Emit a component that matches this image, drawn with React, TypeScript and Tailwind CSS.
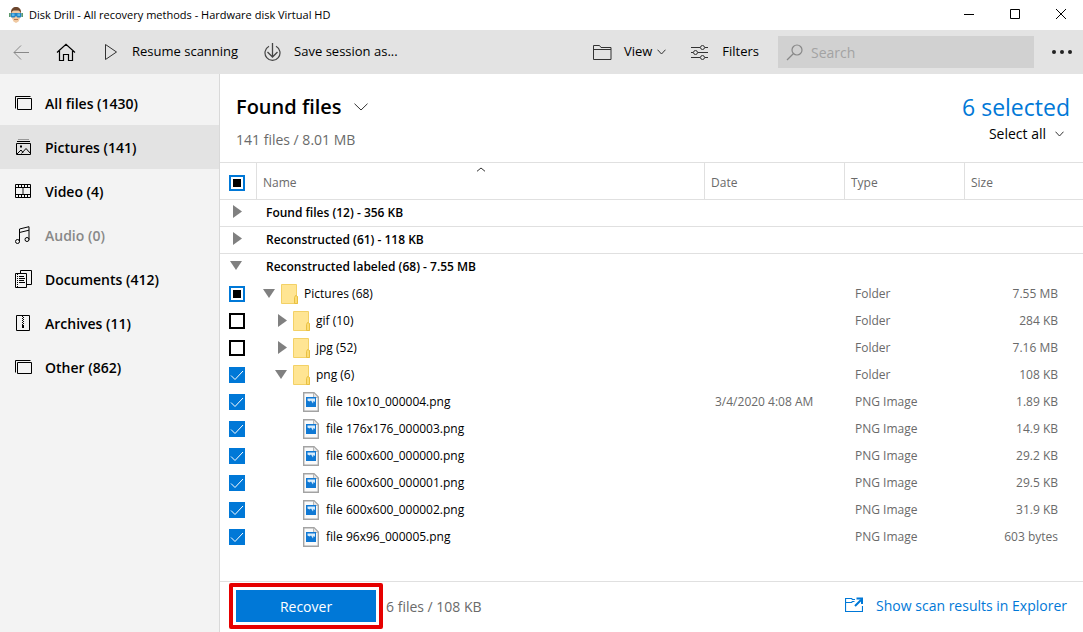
import { useEffect, useRef, type ReactNode } from "react";

type CheckState = "on" | "off" | "mixed";

type Row = {
  name: string;
  kind: "folder" | "file";
  level: 0 | 1 | 2;
  open?: boolean;
  check: CheckState;
  date?: string;
  type: string;
  size: string;
};

const rows: Row[] = [
  { name: "Pictures (68)", kind: "folder", level: 0, open: true, check: "mixed", type: "Folder", size: "7.55 MB" },
  { name: "gif (10)", kind: "folder", level: 1, check: "off", type: "Folder", size: "284 KB" },
  { name: "jpg (52)", kind: "folder", level: 1, check: "off", type: "Folder", size: "7.16 MB" },
  { name: "png (6)", kind: "folder", level: 1, open: true, check: "on", type: "Folder", size: "108 KB" },
  { name: "file 10x10_000004.png", kind: "file", level: 2, check: "on", date: "3/4/2020 4:08 AM", type: "PNG Image", size: "1.89 KB" },
  { name: "file 176x176_000003.png", kind: "file", level: 2, check: "on", type: "PNG Image", size: "14.9 KB" },
  { name: "file 600x600_000000.png", kind: "file", level: 2, check: "on", type: "PNG Image", size: "29.2 KB" },
  { name: "file 600x600_000001.png", kind: "file", level: 2, check: "on", type: "PNG Image", size: "29.5 KB" },
  { name: "file 600x600_000002.png", kind: "file", level: 2, check: "on", type: "PNG Image", size: "31.9 KB" },
  { name: "file 96x96_000005.png", kind: "file", level: 2, check: "on", type: "PNG Image", size: "603 bytes" },
];

const groups = [
  { name: "Found files (12) - 356 KB", open: false },
  { name: "Reconstructed (61) - 118 KB", open: false },
  { name: "Reconstructed labeled (68) - 7.55 MB", open: true },
];

const indents = ["pl-[6px]", "pl-[18px]", "pl-[46px]"];

function Icon({ w, h, className = "", children }: { w: number; h: number; className?: string; children: ReactNode }) {
  return (
    <svg
      width={w}
      height={h}
      viewBox={`0 0 ${w} ${h}`}
      fill="none"
      stroke="currentColor"
      className={`shrink-0 ${className}`}
      aria-hidden="true"
    >
      {children}
    </svg>
  );
}

function Chevron({ w, h, className }: { w: number; h: number; className?: string }) {
  return (
    <Icon w={w} h={h} className={`text-[#333] ${className ?? ""}`}>
      <path d={`M.5 .7 L${w / 2} ${h - 1} L${w - 0.5} .7`} />
    </Icon>
  );
}

function Triangle({ open }: { open?: boolean }) {
  return (
    <Icon w={12} h={14} className="text-[#808080]">
      <path d={open ? "M0 2h12L6 11z" : "M3 0v13l9-6.500z"} fill="currentColor" stroke="none" />
    </Icon>
  );
}

function FolderIcon() {
  return (
    <Icon w={17} h={20}>
      <path d="M.5 .5h15v11l1 1v7H.5z" fill="#ffe593" stroke="#f3d166" />
      <path d="M13.500 19.500v-6l1-2h1l1 1.500v6.500z" fill="#fbdc74" stroke="#e9c042" />
    </Icon>
  );
}

function FileIcon() {
  return (
    <Icon w={17} h={20}>
      <path d="M.7 .7h10.300l4.300 4.300v14.300H.7z" fill="#fafafa" stroke="#a3a3a3" strokeWidth="1.400" />
      <path d="M10.500 1v4.500h4.500" fill="#e4e4e4" stroke="#b5b5b5" />
      <path d="M3 5h10v10H3z" fill="#1079d4" stroke="none" />
      <path d="M4.500 6.500h7.500V10l-1.500-1-.5 2.500-2-3-1.500 1-2-1z" fill="#d8ecfb" stroke="none" />
    </Icon>
  );
}

function Checkbox({ label, state }: { label: string; state: CheckState }) {
  const ref = useRef<HTMLInputElement>(null);

  useEffect(() => {
    if (ref.current) ref.current.indeterminate = state === "mixed";
  }, [state]);

  return (
    <span className="grid size-4">
      <input
        ref={ref}
        type="checkbox"
        aria-label={label}
        defaultChecked={state === "on"}
        className="peer col-start-1 row-start-1 size-4 appearance-none border-2 border-black bg-white checked:border-[#0078d7] checked:bg-[#0078d7] indeterminate:border-[#0078d7]"
      />
      <Icon w={16} h={16} className="pointer-events-none col-start-1 row-start-1 hidden text-white peer-checked:block">
        <path d="M2 8.500l4 4L14 4" />
      </Icon>
      <span className="pointer-events-none col-start-1 row-start-1 m-1 hidden bg-black peer-indeterminate:block" />
    </span>
  );
}

function AppLogo() {
  return (
    <Icon w={14} h={16}>
      <g stroke="none">
        <path d="M2 5c0-3 2-5 5-5s5 2 5 5v3H2z" fill="#6b452c" />
        <path d="M2.500 5l2-1.500h5l2 1.500v5l-2 4.500L7 16l-2.500-1.500-2-4.500z" fill="#f0c9a2" />
        <path d="M1.500 6h11v3.500l-1 1h-3L7 9l-1.500 1.500h-3l-1-1z" fill="#2484c4" />
        <path d="M3 6.500h2.500V9H3zM8.500 6.500H11V9H8.500z" fill="#5cb8ea" />
        <path d="M0 6h1.500v4H0zM12.500 6H14v4h-1.500z" fill="#5d9a6c" />
        <path d="M5 12h4v1H5z" fill="#b5764f" />
      </g>
    </Icon>
  );
}

const stackIcon = (
  <Icon w={18} h={16}>
    <path d="M.5 13.500V1.500h15" />
    <path d="M2.500 3.500h14v11h-14z" />
  </Icon>
);

const categories = [
  { label: "All files (1430)", icon: stackIcon },
  {
    label: "Pictures (141)",
    active: true,
    icon: (
      <Icon w={18} h={16}>
        <path d="M3 .5h11" className="stroke-[#999]" />
        <path d="M2 2.500h13M1.500 4.500h14v11h-14z" />
        <path d="M2 15l4-4 2 2.500M6.500 14.500L11 9.500l4.500 5" />
        <path d="M5 6.500h2v2H5z" fill="currentColor" stroke="none" />
      </Icon>
    ),
  },
  {
    label: "Video (4)",
    icon: (
      <Icon w={18} h={16}>
        <path d="M.5 1.500h15v13H.5zM.5 4.500h15M.5 11.500h15" />
        <path d="M3.500 1.500v3M6.500 1.500v3M9.500 1.500v3M12.500 1.500v3M3.500 11.500v3M6.500 11.500v3M9.500 11.500v3M12.500 11.500v3" />
        <path d="M8 5v6" className="stroke-[#888]" strokeWidth="2" />
      </Icon>
    ),
  },
  {
    label: "Audio (0)",
    muted: true,
    icon: (
      <Icon w={18} h={18}>
        <path d="M4.500 15.500V3L14 .7v13M4.500 6.500L14 4.200" />
        <circle cx="2.500" cy="15.500" r="2" />
        <circle cx="12" cy="13.500" r="2" />
      </Icon>
    ),
  },
  {
    label: "Documents (412)",
    icon: (
      <Icon w={18} h={18}>
        <path d="M5.500 3V.5h11v14h-5" />
        <path d="M.5 3.500h11v14H.5z" />
        <path d="M2.500 4v13" strokeDasharray="1 1" />
        <path d="M4 6.500h5M4 8.500h6M4 10.500h5M4 12.500h6" />
      </Icon>
    ),
  },
  {
    label: "Archives (11)",
    icon: (
      <Icon w={18} h={16}>
        <path d="M1.500 .5h13v15h-13z" />
        <path d="M7.500 1v9" strokeDasharray="1 1" />
        <path d="M8.500 2v9" strokeDasharray="1 1" />
        <path d="M7 10h2v3H7z" fill="currentColor" stroke="none" />
      </Icon>
    ),
  },
  { label: "Other (862)", icon: stackIcon },
];

function TitleBar() {
  return (
    <header className="flex h-[30px] items-center justify-between pr-4 pl-[9px]">
      <div className="flex items-center gap-[6px] text-[11px]">
        <AppLogo />
        <h1>Disk Drill - All recovery methods - Hardware disk Virtual HD</h1>
      </div>
      <div className="flex items-center gap-[34px]">
        <button type="button" aria-label="Minimize">
          <Icon w={12} h={12}><path d="M1 5.500h10" /></Icon>
        </button>
        <button type="button" aria-label="Maximize">
          <Icon w={12} h={12}><path d="M1.500 .5h9v9h-9z" /></Icon>
        </button>
        <button type="button" aria-label="Close">
          <Icon w={12} h={12}><path d="M1 0l10 10M11 0L1 10" /></Icon>
        </button>
      </div>
    </header>
  );
}

function Toolbar() {
  return (
    <div className="flex h-11 items-center bg-[#e3e3e3] pr-[11px] pl-[13px] text-[13px]">
      <button type="button" aria-label="Back" className="mr-[27px] text-[#888]">
        <Icon w={16} h={16}><path d="M1 8.500h15M8 1.500l-7 7 7 7" /></Icon>
      </button>
      <button type="button" aria-label="Home" className="mr-[28px]">
        <Icon w={20} h={18}>
          <path d="M1 9.500L10 1.200l9 8.300M3.500 8v9.500h4v-6h5v6h4V8" strokeWidth="1.200" />
        </Icon>
      </button>
      <button type="button" className="mr-[26px] flex items-center gap-[14px]">
        <Icon w={14} h={18} className="text-[#333]"><path d="M1.500 1.500v15l11-7.500z" /></Icon>
        Resume scanning
      </button>
      <button type="button" className="flex items-center gap-[13px]">
        <Icon w={17} h={18} className="text-[#444]">
          <path d="M5 3.200a7.500 7.500 0 1 0 7 0" strokeWidth="1.200" />
          <path d="M8.500 0v14M3.500 9l5 5 5-5" strokeWidth="1.300" />
        </Icon>
        Save session as...
      </button>
      <button type="button" className="mr-[25px] ml-auto flex items-center gap-[12px]">
        <Icon w={19} h={16} className="text-[#333]">
          <path d="M.5 15.500V1.500h6l1.500 2h10v12zM.5 5.500h17.500" />
        </Icon>
        <span className="flex items-center gap-[5px]">
          View
          <Chevron w={9} h={6} />
        </span>
      </button>
      <button type="button" className="mr-[19px] flex items-center gap-[14px]">
        <Icon w={17} h={16} className="text-[#333]">
          <path d="M0 3.500h9M14 3.500h3M0 8.500h2M7 8.500h10M0 13.500h9M14 13.500h3" />
          <circle cx="11.500" cy="3.500" r="2" />
          <circle cx="4.500" cy="8.500" r="2" />
          <circle cx="11.500" cy="13.500" r="2" />
        </Icon>
        Filters
      </button>
      <label className="mr-[18px] flex h-8 w-64 items-center gap-[8px] bg-[#d1d1d1] pl-[8px] text-[14px] text-[#888]">
        <Icon w={17} h={17}>
          <circle cx="11" cy="6" r="5" strokeWidth="1.200" />
          <path d="M7.500 9.500L1 16" strokeWidth="1.200" />
        </Icon>
        <input
          type="search"
          aria-label="Search"
          placeholder="Search"
          className="w-full bg-transparent text-black outline-none placeholder:text-[#a3a3a3]"
        />
      </label>
      <button type="button" aria-label="More">
        <Icon w={20} h={4} className="text-[#222]">
          <g fill="currentColor" stroke="none">
            <circle cx="2" cy="2" r="2" />
            <circle cx="10" cy="2" r="2" />
            <circle cx="18" cy="2" r="2" />
          </g>
        </Icon>
      </button>
    </div>
  );
}

function Sidebar() {
  return (
    <nav className="w-[220px] shrink-0 border-r border-[#d9d9d9] bg-[#f3f3f3] pt-[7px]">
      {categories.map((c) => (
        <button
          key={c.label}
          type="button"
          className={`flex h-11 w-full items-center gap-[12px] pl-[15px] text-[14px] font-semibold ${c.active ? "bg-[#e3e3e3]" : ""}`}
        >
          {c.icon}
          <span className={c.muted ? "text-[#888]" : ""}>{c.label}</span>
        </button>
      ))}
    </nav>
  );
}

function FilesTable() {
  const th = "h-[37px] border-b border-[#e0e0e0] p-0 pt-[3px] text-left font-normal text-[#6a6a6a]";

  return (
    <table className="w-full table-fixed border-separate border-spacing-0 border-t border-[#e0e0e0] text-[12px]">
      <colgroup>
        <col className="w-[37px]" />
        <col />
        <col className="w-[140px]" />
        <col className="w-[120px]" />
        <col className="w-[118px]" />
      </colgroup>
      <thead>
        <tr>
          <th className={`${th} border-r`}>
            <div className="pl-[9px]"><Checkbox label="Select all files" state="mixed" /></div>
          </th>
          <th className={`${th} relative border-r`}>
            <span className="pl-[6px]">Name</span>
            <Chevron w={9} h={5} className="absolute top-1 left-1/2 -translate-x-1/2 rotate-180" />
          </th>
          <th className={`${th} border-r`}><span className="pl-[6px]">Date</span></th>
          <th className={`${th} border-r`}><span className="pl-[6px]">Type</span></th>
          <th className={th}><span className="pl-[6px]">Size</span></th>
        </tr>
      </thead>
      <tbody>
        {groups.map((g) => (
          <tr key={g.name} className={g.open ? "h-[26px]" : "h-[27px] [&>td]:border-b [&>td]:border-[#e0e0e0]"}>
            <td className="p-0 pb-[2px]">
              <button type="button" aria-label={`Toggle ${g.name}`} className="ml-[10px] block">
                <Triangle open={g.open} />
              </button>
            </td>
            <td colSpan={4} className="p-0 pl-[9px] font-semibold">{g.name}</td>
          </tr>
        ))}
        {rows.map((r) => (
          <tr key={r.name} className="h-[27px] text-[#6a6a6a]">
            <td className="p-0 pl-[9px]"><Checkbox label={r.name} state={r.check} /></td>
            <td className="p-0">
              <div className={`flex items-center gap-[6px] text-black ${indents[r.level]}`}>
                {r.kind === "folder" && (
                  <button type="button" aria-label={`Toggle ${r.name}`}>
                    <Triangle open={r.open} />
                  </button>
                )}
                {r.kind === "folder" ? <FolderIcon /> : <FileIcon />}
                <span>{r.name}</span>
              </div>
            </td>
            <td className="p-0 pl-[10px]">{r.date}</td>
            <td className="p-0 pl-[10px]">{r.type}</td>
            <td className="p-0 pr-[25px] text-right">{r.size}</td>
          </tr>
        ))}
      </tbody>
    </table>
  );
}

function Footer() {
  return (
    <footer className="flex items-start justify-between border-t border-[#e0e0e0] pt-px pr-4 pb-[3px] pl-[9px] text-[14px]">
      <div className="flex items-center gap-[3px]">
        <div className="rounded-xs border-4 border-[#e60000] p-[3px]">
          <button type="button" className="block h-8 w-[140px] bg-[#0078d7] text-white">Recover</button>
        </div>
        <span className="text-[#6a6a6a]">6 files / 108 KB</span>
      </div>
      <a href="#" className="flex h-11 items-center gap-[13px] text-[#0078d7]">
        <Icon w={18} h={16}>
          <path d="M10 2.500H7.500l-1-1h-6v13h17V9M.5 5.500h6l1-1h2" strokeWidth="1.200" />
          <path d="M10 9l6-6M11.500 1.500h5.500v5.500" strokeWidth="2" />
        </Icon>
        Show scan results in Explorer
      </a>
    </footer>
  );
}

export default function App() {
  return (
    <div className="flex min-h-screen flex-col bg-white font-['Open_Sans','Noto_Sans',sans-serif] text-black">
      <TitleBar />
      <Toolbar />
      <div className="flex grow">
        <Sidebar />
        <main className="flex min-w-0 grow flex-col">
          <div className="flex h-[88px] justify-between pt-[20px] pr-[13px] pl-4">
            <div>
              <button type="button" className="flex items-center gap-[12px]">
                <h2 className="text-[20px] leading-[26px] font-semibold">Found files</h2>
                <Chevron w={14} h={8} />
              </button>
              <p className="mt-[10px] text-[14px] leading-[20px] text-[#6a6a6a]">141 files / 8.01 MB</p>
            </div>
            <div className="flex flex-col items-end">
              <p className="text-[23px] leading-[26px] text-[#0078d7]">6 selected</p>
              <button type="button" className="mt-[4px] mr-[6px] flex items-center gap-[9px] text-[14px] leading-[20px]">
                Select all
                <Chevron w={9} h={6} />
              </button>
            </div>
          </div>
          <div className="grow">
            <FilesTable />
          </div>
          <Footer />
        </main>
      </div>
    </div>
  );
}
